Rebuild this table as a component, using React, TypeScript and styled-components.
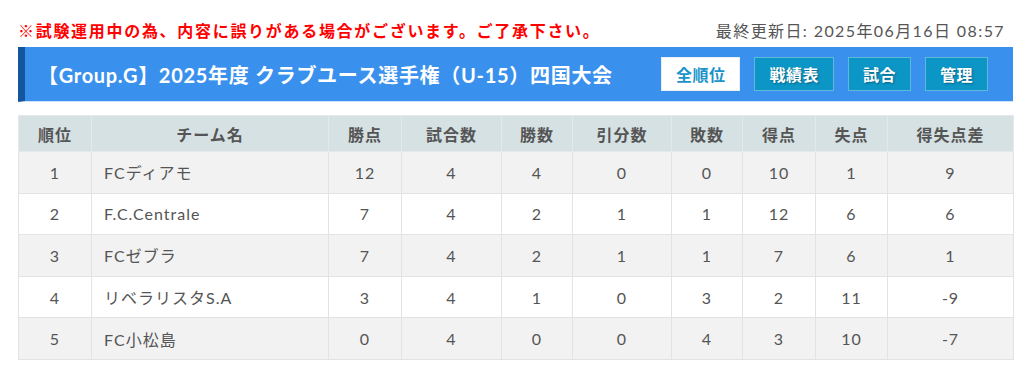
import React from "react";
import styled, { createGlobalStyle } from "styled-components";

const GlobalStyle = createGlobalStyle`
  html, body {
    margin: 0;
    background: #fff;
  }
  body {
    font-family: Lato, "Noto Sans CJK JP", sans-serif;
    color: #555;
  }
`;

const Page = styled.div`
  padding: 18px 11px 0 18px;
`;

const NoticeRow = styled.div`
  display: flex;
  justify-content: space-between;
  align-items: center;
  height: 24px;
  margin-bottom: 5px;
  padding-right: 8px;
`;

const Notice = styled.span`
  color: #ff0000;
  font-size: 16px;
  font-weight: 700;
  letter-spacing: 1.7px;
`;

const Updated = styled.span`
  color: #555;
  font-size: 16px;
  letter-spacing: 1.4px;
`;

const TitleBar = styled.div`
  display: flex;
  align-items: center;
  justify-content: space-between;
  height: 55px;
  box-sizing: border-box;
  background: #3a91ed;
  border-left: 7px solid #13569f;
  border-bottom: 1px solid #cfe2f7;
  padding: 0 25px 0 13px;
`;

const Title = styled.h1`
  margin: 0;
  color: #fff;
  font-size: 20px;
  font-weight: 700;
  letter-spacing: 0.7px;
`;

const Nav = styled.nav`
  display: flex;
  gap: 14px;
`;

const NavButton = styled.button<{ $active?: boolean }>`
  height: 34px;
  padding: 0 14px;
  font-family: inherit;
  font-size: 16px;
  font-weight: 700;
  letter-spacing: 0.5px;
  cursor: pointer;
  border: 1px solid ${(p) => (p.$active ? "#e9eef3" : "#63b6dc")};
  background: ${(p) => (p.$active ? "#fff" : "#0b96c6")};
  color: ${(p) => (p.$active ? "#1a93c8" : "#fff")};
  text-shadow: ${(p) => (p.$active ? "none" : "1px 1px 2px rgba(0,0,0,0.35)")};
`;

const Table = styled.table`
  width: 995px;
  margin-top: 13px;
  border-collapse: collapse;
  table-layout: fixed;
  font-size: 16px;
  letter-spacing: 1px;
  color: #555;
`;

const Th = styled.th`
  height: 35px;
  padding: 0;
  background: #d5e1e3;
  font-weight: 700;
  color: #555;
  border: 1px solid #e4eaeb;
`;

const Row = styled.tr`
  &:nth-child(odd) {
    background: #f2f2f2;
  }
  &:nth-child(even) {
    background: #fff;
  }
`;

const Td = styled.td<{ $left?: boolean }>`
  height: 41.6px;
  padding: 0 ${(p) => (p.$left ? "12px" : "0")};
  box-sizing: border-box;
  text-align: ${(p) => (p.$left ? "left" : "center")};
  border: 1px solid #e3e3e3;
`;

const columns = [
  { label: "順位", width: 73 },
  { label: "チーム名", width: 237 },
  { label: "勝点", width: 73 },
  { label: "試合数", width: 100 },
  { label: "勝数", width: 71 },
  { label: "引分数", width: 99 },
  { label: "敗数", width: 71 },
  { label: "得点", width: 73 },
  { label: "失点", width: 72 },
  { label: "得失点差", width: 126 },
];

const standings: (string | number)[][] = [
  [1, "FCディアモ", 12, 4, 4, 0, 0, 10, 1, 9],
  [2, "F.C.Centrale", 7, 4, 2, 1, 1, 12, 6, 6],
  [3, "FCゼブラ", 7, 4, 2, 1, 1, 7, 6, 1],
  [4, "リベラリスタS.A", 3, 4, 1, 0, 3, 2, 11, -9],
  [5, "FC小松島", 0, 4, 0, 0, 4, 3, 10, -7],
];

const navItems = ["全順位", "戦績表", "試合", "管理"];

export default function App() {
  return (
    <Page>
      <GlobalStyle />
      <NoticeRow>
        <Notice>※試験運用中の為、内容に誤りがある場合がございます。ご了承下さい。</Notice>
        <Updated>最終更新日: 2025年06月16日 08:57</Updated>
      </NoticeRow>
      <TitleBar>
        <Title>【Group.G】2025年度 クラブユース選手権（U-15）四国大会</Title>
        <Nav>
          {navItems.map((item, i) => (
            <NavButton key={item} $active={i === 0}>
              {item}
            </NavButton>
          ))}
        </Nav>
      </TitleBar>
      <Table>
        <colgroup>
          {columns.map((c) => (
            <col key={c.label} style={{ width: c.width }} />
          ))}
        </colgroup>
        <thead>
          <tr>
            {columns.map((c) => (
              <Th key={c.label}>{c.label}</Th>
            ))}
          </tr>
        </thead>
        <tbody>
          {standings.map((row) => (
            <Row key={row[0]}>
              {row.map((cell, i) => (
                <Td key={i} $left={i === 1}>
                  {cell}
                </Td>
              ))}
            </Row>
          ))}
        </tbody>
      </Table>
    </Page>
  );
}
